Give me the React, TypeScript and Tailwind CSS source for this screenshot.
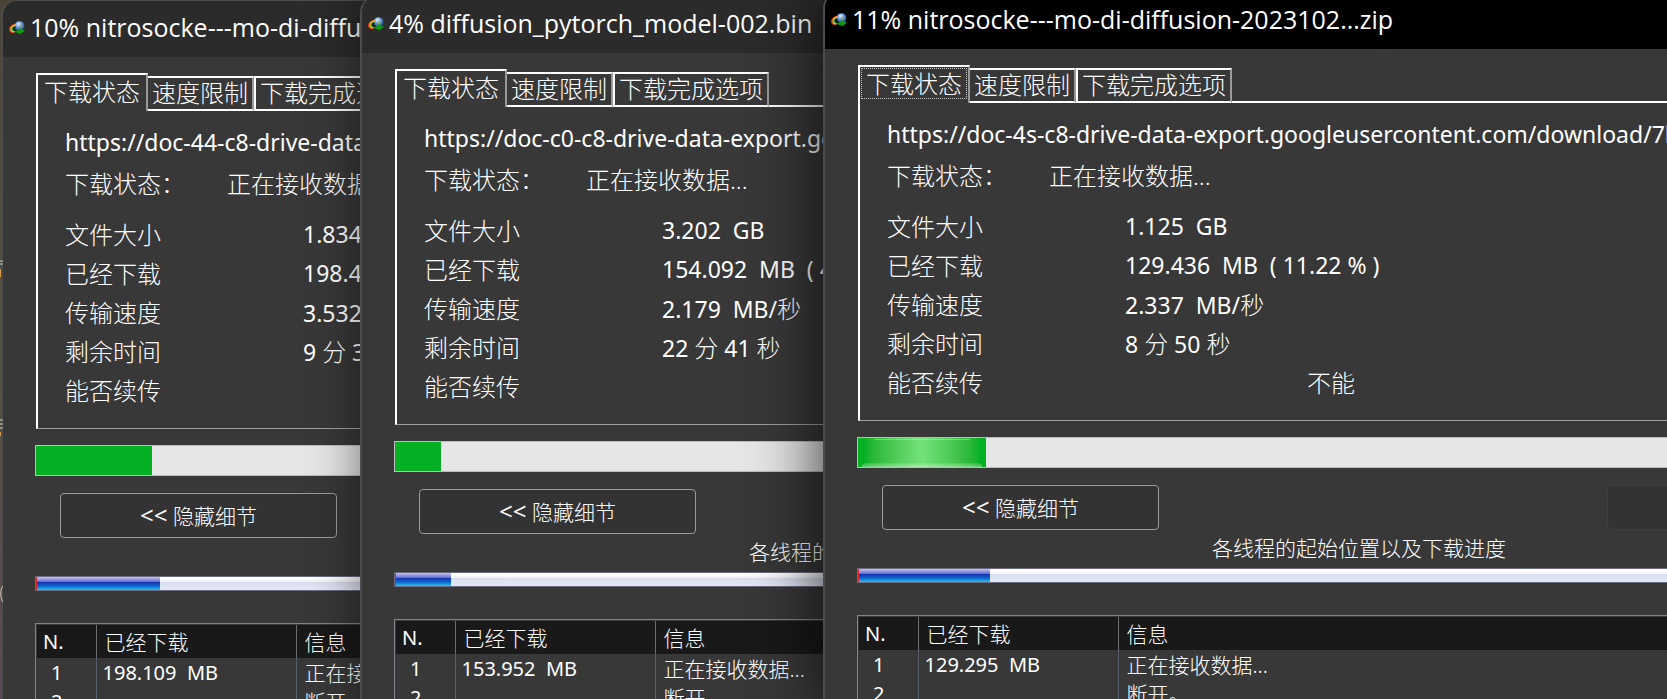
import { useState } from "react";
import clsx from "clsx";

type ThreadRow = {
  n: number;
  loaded: string;
  info: string;
};

type Download = {
  id: string;
  title: string;
  url: string;
  size: string;
  loaded: string;
  speed: string;
  timeLeft: string;
  resume: string;
  percent: number;
  threadPercent: number;
  rows: ThreadRow[];
};

const TABS = ["下载状态", "速度限制", "下载完成选项"];

const DOWNLOADS: Download[] = [
  {
    id: "d1",
    title: "10% nitrosocke---mo-di-diffusion-2023102...zip",
    url: "https://doc-44-c8-drive-data-export.googleusercontent.com/download/",
    size: "1.834  GB",
    loaded: "198.436  MB  ( 10.56 % )",
    speed: "3.532  MB/秒",
    timeLeft: "9 分 3 秒",
    resume: "不能",
    percent: 10,
    threadPercent: 10.7,
    rows: [
      { n: 1, loaded: "198.109  MB", info: "正在接收数据..." },
      { n: 2, loaded: "", info: "断开。" },
    ],
  },
  {
    id: "d2",
    title: "4% diffusion_pytorch_model-002.bin",
    url: "https://doc-c0-c8-drive-data-export.googleusercontent.com/download/",
    size: "3.202  GB",
    loaded: "154.092  MB  ( 4.69 % )",
    speed: "2.179  MB/秒",
    timeLeft: "22 分 41 秒",
    resume: "不能",
    percent: 4,
    threadPercent: 4.8,
    rows: [
      { n: 1, loaded: "153.952  MB", info: "正在接收数据..." },
      { n: 2, loaded: "", info: "断开。" },
    ],
  },
  {
    id: "d3",
    title: "11% nitrosocke---mo-di-diffusion-2023102...zip",
    url: "https://doc-4s-c8-drive-data-export.googleusercontent.com/download/7l7t",
    size: "1.125  GB",
    loaded: "129.436  MB  ( 11.22 % )",
    speed: "2.337  MB/秒",
    timeLeft: "8 分 50 秒",
    resume: "不能",
    percent: 11,
    threadPercent: 11.4,
    rows: [
      { n: 1, loaded: "129.295  MB", info: "正在接收数据..." },
      { n: 2, loaded: "", info: "断开。" },
    ],
  },
];

// Chinese characters are set light and a size larger than the digits around them
function Mixed({ text }: { text: string }) {
  return text.split(/([\u4e00-\u9fff]+)/).map((part, i) =>
    i % 2 ? (
      <span key={i} className="text-2xl font-light">
        {part}
      </span>
    ) : (
      part
    )
  );
}

function AppIcon() {
  return (
    <svg viewBox="0 0 16 16" className="size-4 shrink-0" aria-hidden="true">
      <defs>
        <radialGradient id="globe" cx="0.4" cy="0.3" r="0.8">
          <stop offset="0" stopColor="#e8f2ff" />
          <stop offset="0.45" stopColor="#5a93dc" />
          <stop offset="1" stopColor="#1c3f7c" />
        </radialGradient>
      </defs>
      <circle cx="10.5" cy="6" r="4.8" fill="url(#globe)" />
      <path d="M11 4.500c1 .3 2 1.500 1.500 2.500s-1.500 1-2 .2-.5-2.500.5-2.700z" fill="#9fae52" />
      <path d="M6.500 4C3 4.800 .4 7.200 .7 9.600c.2 1.900 2 2.900 4.300 3" fill="none" stroke="#d4301c" strokeWidth="1.500" />
      <path d="M7 5C4.300 5.600 1.900 7.500 2 9.500c.1 1.500 1.700 2.300 3.800 2.400" fill="none" stroke="#f4d820" strokeWidth="1.300" />
      <path d="M7 6C5 6.500 3.100 8 3.200 9.400c.1 1 1.300 1.600 2.800 1.700" fill="none" stroke="#3aa83a" strokeWidth="1.200" />
      <path d="M6.500 6.800C5 7.300 4.300 8.200 4.500 9c.3 1 2 1.400 3.500 1.200" fill="none" stroke="#101010" strokeWidth="1.200" />
      <path d="M5.500 10.500c1.500.4 3.200.1 4.700-1L9.800 7.800 16 10.800l-5.500 4-.2-1.700c-1.800.4-3.600-.4-4.800-2.600z" fill="#129a14" />
    </svg>
  );
}

function DownloadWindow({ item, active, className }: { item: Download; active?: boolean; className: string }) {
  const [tab, setTab] = useState(0);

  const facts = [
    { label: "文件大小", value: item.size },
    { label: "已经下载", value: item.loaded },
    { label: "传输速度", value: item.speed },
    { label: "剩余时间", value: item.timeLeft },
  ];

  return (
    <section
      className={clsx(
        "absolute w-[1230px] overflow-hidden rounded-t-2xl border-x-2 border-t border-[#4c4c4c] bg-[#383838]",
        className
      )}
    >
      <header className={clsx("flex h-14 items-center gap-[5px] pb-0.5 pl-1.5", active ? "bg-black" : "bg-[#2b2b2b]")}>
        <AppIcon />
        <h2 className="whitespace-pre font-['Open_Sans','Noto_Sans_CJK_SC',sans-serif] text-[25px]">{item.title}</h2>
      </header>

      <div className="px-8 pt-4">
        {/* Tabs */}
        <div role="tablist" className="ml-px flex items-end text-2xl font-light">
          {TABS.map((name, i) => (
            <button
              key={name}
              type="button"
              role="tab"
              aria-selected={tab === i}
              onClick={() => setTab(i)}
              className={clsx(
                "border-t-2 border-r-2 border-t-white border-r-[#9a9a9a]",
                tab === i
                  ? "h-[38px] border-l-2 border-l-white px-px pt-px pb-1"
                  : "h-[35px] border-b-2 border-b-white px-1 pb-0.5",
                i === 2 && tab !== i && "border-l-2 border-l-white"
              )}
            >
              <span
                className={clsx(
                  "flex h-full items-center",
                  tab === i && "border px-1",
                  tab === i && (active ? "border-dotted border-[#c8c8c8]" : "border-transparent")
                )}
              >
                {name}
              </span>
            </button>
          ))}
          <div className="flex-1 border-b-2 border-white" />
        </div>

        {/* Status panel */}
        <div
          role="tabpanel"
          className="ml-px border-r border-b border-l-2 border-r-[#a0a0a0] border-b-[#a0a0a0] border-l-white pt-2.5 pb-[18px] pl-[27px]"
        >
          <p className="flex h-[42px] items-center whitespace-pre text-[23px]">{item.url}</p>
          <dl className="grid h-[42px] grid-cols-[162px_1fr] items-center text-2xl font-light">
            <dt>下载状态：</dt>
            <dd>正在接收数据...</dd>
          </dl>
          <dl className="mt-2.5 grid auto-rows-[39px] grid-cols-[238px_1fr] items-center text-2xl font-light">
            {facts.map((f) => (
              <div key={f.label} className="contents">
                <dt>{f.label}</dt>
                <dd className="whitespace-pre text-[23px] font-normal">
                  <Mixed text={f.value} />
                </dd>
              </div>
            ))}
            <dt>能否续传</dt>
            <dd className="pl-[182px]">{item.resume}</dd>
          </dl>
        </div>

        {/* Total progress */}
        <div className="mt-4 h-[31px] border border-[#bcbcbc] bg-[#e6e6e6]">
          <div className="relative h-full overflow-hidden bg-[#06b025]" style={{ width: `${item.percent}%` }}>
            {active && (
              <>
                <div className="h-full bg-linear-to-r from-[#06b025] from-5% via-[#74e27a] to-[#06b025] to-95%" />
                <div className="absolute inset-x-1 bottom-0 h-1 rounded-t-full bg-linear-to-t from-white/40 to-white/10" />
                <div className="absolute inset-x-4 top-px h-px bg-white/30" />
              </>
            )}
          </div>
        </div>

        <div className="mt-[17px] flex gap-[448px] pl-[25px]">
          <button
            type="button"
            className="h-[45px] w-[277px] rounded border border-[#9b9b9b] bg-[#333333] text-[21px] font-light"
          >
            <span className="text-2xl font-normal">&lt;&lt;</span> 隐藏细节
          </button>
          <button
            type="button"
            disabled
            aria-label="暂停"
            className="h-[45px] w-[277px] rounded border border-[#3e3e3e] bg-[#333333]"
          />
        </div>

        {/* Per-thread progress */}
        <p className="flex h-[38px] items-center pl-[355px] text-[21px] font-light">各线程的起始位置以及下载进度</p>
        <div className="h-[15px] border border-[#6a6a80] bg-[linear-gradient(#ffffff_10%,#f0f1fa_38%,#d8deec_40%,#e6eaf8)]">
          <div
            className="h-full border-l border-[#e02020] bg-[linear-gradient(#c4c4f0,#6a6cd0_36%,#1034b0_40%,#1064cc_70%,#20c8f0)]"
            style={{ width: `${item.threadPercent}%` }}
          />
        </div>

        <div className="mt-8 border border-[#83838b] p-px">
          <table className="w-full table-fixed border-collapse text-left text-[21px]">
            <colgroup>
              <col className="w-[59px]" />
              <col className="w-[200px]" />
              <col />
            </colgroup>
            <thead className="bg-[#191919]">
              <tr className="h-[33px]">
                <th className="border-r border-[#6e6e6e] py-0 pl-1.5 text-xl leading-8 font-normal">N.</th>
                <th className="border-r border-[#6e6e6e] py-0 pl-2 leading-8 font-light">已经下载</th>
                <th className="py-0 pl-2 leading-8 font-light">信息</th>
              </tr>
            </thead>
            <tbody>
              {item.rows.map((row) => (
                <tr key={row.n} className="h-[29px]">
                  <td className="border-r border-[#555d6e] py-0 pl-3.5 text-xl leading-7">{row.n}</td>
                  <td className="border-r border-[#555d6e] py-0 pl-1.5 text-xl leading-7 whitespace-pre">{row.loaded}</td>
                  <td className="py-0 pl-2 leading-7 font-light">{row.info}</td>
                </tr>
              ))}
            </tbody>
          </table>
        </div>
      </div>
    </section>
  );
}

// Sliver of the wallpaper's icon labels left of the first window
function DesktopEdge() {
  return (
    <svg viewBox="0 0 3 699" className="absolute top-0 left-0 h-[699px] w-[3px]" aria-hidden="true">
      <path d="M0 261h3M0 264h3M0 420h3M0 424h3M0 428h3" stroke="#c9c9c9" />
      <path d="M0 271h1M0 275h1M0 434h1" stroke="#d59a4a" strokeWidth="4" />
      <path d="M3 586c-3 3-3 12 0 16" fill="none" stroke="#d8c9b0" />
    </svg>
  );
}

export default function App() {
  return (
    <main className="relative h-screen overflow-hidden bg-linear-to-b from-[#4a4437] via-[#55543f] to-[#5e4a58] font-['Noto_Sans','Noto_Sans_CJK_SC',sans-serif] text-white">
      <DownloadWindow item={DOWNLOADS[0]} className="top-0 left-px" />
      <DownloadWindow item={DOWNLOADS[1]} className="-top-1 left-[360px] shadow-[0_0_50px_rgba(0,0,0,0.5)]" />
      <DownloadWindow item={DOWNLOADS[2]} active className="-top-2 left-[823px] shadow-[0_0_70px_rgba(0,0,0,0.8)]" />
      <DesktopEdge />
    </main>
  );
}
